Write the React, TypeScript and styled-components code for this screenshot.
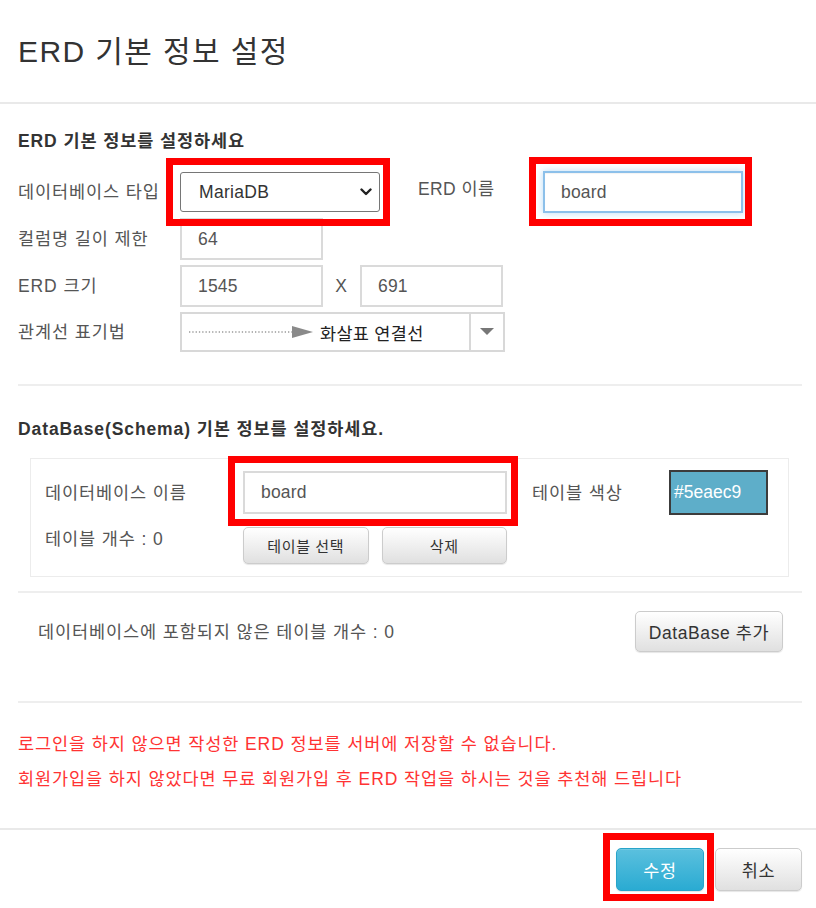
import React from 'react';
import styled, { createGlobalStyle } from 'styled-components';

const GlobalStyle = createGlobalStyle`
  html, body { margin: 0; padding: 0; background: #fff; }
  body {
    font-family: "Liberation Sans", "Noto Sans CJK KR", sans-serif;
    font-size: 17.5px;
    letter-spacing: 0.9px;
    color: #333;
  }
  * { box-sizing: border-box; }
`;

const Modal = styled.div`
  width: 816px;
  min-height: 908px;
  background: #fff;
`;

const Header = styled.header`
  height: 104px;
  display: flex;
  align-items: center;
  padding: 0 18px;
  border-bottom: 2px solid #e9e9e9;
`;

const Title = styled.h4`
  margin: 0;
  font-size: 30px;
  font-weight: 400;
  line-height: 1.1;
  letter-spacing: 1.4px;
  color: #333;
`;

const Body = styled.div`
  padding: 0 14px 0 18px;
`;

const SectionTitle = styled.h5<{ $top: number; $bottom: number }>`
  margin: ${p => p.$top}px 0 ${p => p.$bottom}px;
  font-size: 17.5px;
  font-weight: 700;
  line-height: 24px;
  color: #333;
`;

const FormGrid = styled.div`
  display: grid;
  grid-template-columns: 162px 1fr;
  grid-template-rows: 42px 42px 42px 40px;
  row-gap: 5px;
`;

const Label = styled.div`
  align-self: center;
  color: #555;
  line-height: 24px;
  white-space: nowrap;
`;

const Controls = styled.div`
  display: flex;
  align-items: center;
`;

const Highlight = styled.div<{ $t: number; $r: number; $b: number; $l: number }>`
  position: relative;
  display: inline-flex;
  &::after {
    content: '';
    position: absolute;
    top: -${p => p.$t}px;
    right: -${p => p.$r}px;
    bottom: -${p => p.$b}px;
    left: -${p => p.$l}px;
    border: 7px solid #ff0000;
    pointer-events: none;
  }
`;

const NativeSelect = styled.div`
  width: 200px;
  height: 40px;
  border: 1px solid #767676;
  border-radius: 3px;
  background: #fff;
  display: flex;
  align-items: center;
  justify-content: space-between;
  padding: 0 7px 0 18px;
  color: #333;
  letter-spacing: 0.3px;
`;

const InlineLabel = styled(Label)`
  width: 125px;
  margin-left: 38px;
  letter-spacing: 0.4px;
  transform: translateY(-3px);
`;

const TextInput = styled.div<{ $w: number; $h?: number; $focus?: boolean }>`
  width: ${p => p.$w}px;
  height: ${p => p.$h ?? 42}px;
  display: flex;
  align-items: center;
  padding-left: 16px;
  background: #fff;
  color: #555;
  letter-spacing: 0.2px;
  border: 2px solid ${p => (p.$focus ? '#8cc0ea' : '#dadada')};
  box-shadow: ${p =>
    p.$focus ? '0 0 7px rgba(102,175,233,.45), inset 0 1px 1px rgba(0,0,0,.05)' : 'none'};
`;

const TimesLabel = styled.div`
  width: 37px;
  text-align: center;
  color: #555;
`;

const RelSelect = styled.div`
  width: 325px;
  height: 40px;
  border: 2px solid #d8d8d8;
  display: flex;
  background: #fff;
`;

const RelValue = styled.div`
  flex: 1;
  display: flex;
  align-items: center;
  padding-left: 5px;
  gap: 5px;
  color: #222;
  letter-spacing: 0.3px;
`;

const RelCaret = styled.div`
  width: 34px;
  border-left: 2px solid #d8d8d8;
  display: flex;
  align-items: center;
  justify-content: center;
`;

const Divider = styled.hr<{ $top: number }>`
  margin: ${p => p.$top}px 0 0;
  border: 0;
  border-top: 2px solid #eeeeee;
  height: 0;
`;

const DbBox = styled.div`
  margin: 0 13px 0 12px;
  border: 1px solid #ececec;
  padding: 12px 14px;
  display: grid;
  grid-template-columns: 198px 264px 162px 99px;
  grid-template-rows: 43px 37px;
  row-gap: 13px;
`;

const BoxLabel = styled(Label)<{ $indent?: number; $start?: boolean }>`
  padding-left: ${p => p.$indent ?? 0}px;
  align-self: ${p => (p.$start ? 'start' : 'center')};
`;

const ColorSwatch = styled.div`
  width: 99px;
  height: 45px;
  align-self: center;
  background: #5eaec9;
  border: 2px solid #3c3c3c;
  color: #fff;
  display: flex;
  align-items: center;
  padding-left: 3px;
  letter-spacing: 0;
`;

const ButtonGroup = styled.div`
  display: flex;
  gap: 13px;
`;

const Button = styled.button<{ $variant?: 'default' | 'info'; $small?: boolean; $w?: number; $h?: number }>`
  font-family: inherit;
  font-size: ${p => (p.$small ? 15 : 17.5)}px;
  letter-spacing: 0.6px;
  height: ${p => p.$h ?? 41}px;
  width: ${p => (p.$w ? `${p.$w}px` : 'auto')};
  flex: ${p => (p.$w ? 'none' : '1')};
  padding: 0 10px;
  border-radius: 5px;
  cursor: pointer;
  color: ${p => (p.$variant === 'info' ? '#fff' : '#333')};
  border: 1px solid ${p => (p.$variant === 'info' ? '#28a4c9' : '#cccccc')};
  background: ${p =>
    p.$variant === 'info'
      ? 'linear-gradient(to bottom, #5bc0de 0%, #2aabd2 100%)'
      : 'linear-gradient(to bottom, #ffffff 0%, #e0e0e0 100%)'};
  box-shadow: inset 0 1px 0 rgba(255,255,255,.15), 0 1px 1px rgba(0,0,0,.1);
`;

const OrphanRow = styled.div`
  margin-top: 18px;
  height: 41px;
  padding: 0 19px 0 20px;
  display: flex;
  align-items: center;
  justify-content: space-between;
`;

const Notice = styled.p<{ $top: number }>`
  margin: ${p => p.$top}px 0 0;
  line-height: 24px;
  color: #ff3333;
`;

const NoticeBlock = styled.div`
  padding-bottom: 37px;
`;

const Footer = styled.footer`
  border-top: 2px solid #e9e9e9;
  padding: 18px 14px 18px 18px;
  display: flex;
  justify-content: flex-end;
  gap: 11px;
`;

const Chevron = () => (
  <svg width="12" height="8" viewBox="0 0 12 8">
    <polyline points="1.5,1.5 6,6 10.5,1.5" fill="none" stroke="#222" strokeWidth="2.4" strokeLinecap="round" strokeLinejoin="round" />
  </svg>
);

const DottedArrow = () => (
  <svg width="128" height="14" viewBox="0 0 128 14">
    <line x1="2" y1="7" x2="106" y2="7" stroke="#9a9a9a" strokeWidth="1.3" strokeDasharray="1.3 2" />
    <polygon points="105,1 126,7 105,13" fill="#8a8a8a" />
  </svg>
);

const Caret = () => (
  <svg width="14" height="8" viewBox="0 0 14 8">
    <polygon points="0,0 14,0 7,7" fill="#777" />
  </svg>
);

export default function App() {
  return (
    <>
      <GlobalStyle />
      <Modal>
        <Header>
          <Title>ERD 기본 정보 설정</Title>
        </Header>
        <Body>
          <SectionTitle $top={25} $bottom={18}>ERD 기본 정보를 설정하세요</SectionTitle>
          <FormGrid>
            <Label>데이터베이스 타입</Label>
            <Controls>
              <Highlight $t={14} $r={10} $b={14} $l={14}>
                <NativeSelect>
                  <span>MariaDB</span>
                  <Chevron />
                </NativeSelect>
              </Highlight>
              <InlineLabel>ERD 이름</InlineLabel>
              <Highlight $t={14} $r={9} $b={13} $l={14}>
                <TextInput $w={200} $focus>board</TextInput>
              </Highlight>
            </Controls>

            <Label>컬럼명 길이 제한</Label>
            <Controls>
              <TextInput $w={143}>64</TextInput>
            </Controls>

            <Label>ERD 크기</Label>
            <Controls>
              <TextInput $w={143}>1545</TextInput>
              <TimesLabel>X</TimesLabel>
              <TextInput $w={143}>691</TextInput>
            </Controls>

            <Label>관계선 표기법</Label>
            <Controls>
              <RelSelect>
                <RelValue>
                  <DottedArrow />
                  <span>화살표 연결선</span>
                </RelValue>
                <RelCaret>
                  <Caret />
                </RelCaret>
              </RelSelect>
            </Controls>
          </FormGrid>

          <Divider $top={32} />

          <SectionTitle $top={31} $bottom={17}>DataBase(Schema) 기본 정보를 설정하세요.</SectionTitle>
          <DbBox>
            <BoxLabel>데이터베이스 이름</BoxLabel>
            <Controls>
              <Highlight $t={15} $r={11} $b={12} $l={15}>
                <TextInput $w={264} $h={43}>board</TextInput>
              </Highlight>
            </Controls>
            <BoxLabel $indent={25}>테이블 색상</BoxLabel>
            <ColorSwatch>#5eaec9</ColorSwatch>

            <BoxLabel $start>테이블 개수 : 0</BoxLabel>
            <ButtonGroup>
              <Button $small $h={37}>테이블 선택</Button>
              <Button $small $h={37}>삭제</Button>
            </ButtonGroup>
          </DbBox>

          <Divider $top={14} />

          <OrphanRow>
            <Label>데이터베이스에 포함되지 않은 테이블 개수 : 0</Label>
            <Button $w={148}>DataBase 추가</Button>
          </OrphanRow>

          <Divider $top={49} />

          <NoticeBlock>
            <Notice $top={29}>로그인을 하지 않으면 작성한 ERD 정보를 서버에 저장할 수 없습니다.</Notice>
            <Notice $top={11}>회원가입을 하지 않았다면 무료 회원가입 후 ERD 작업을 하시는 것을 추천해 드립니다</Notice>
          </NoticeBlock>
        </Body>
        <Footer>
          <Highlight $t={15} $r={10} $b={10} $l={13}>
            <Button $variant="info" $w={88} $h={43}>수정</Button>
          </Highlight>
          <Button $w={87} $h={43}>취소</Button>
        </Footer>
      </Modal>
    </>
  );
}
